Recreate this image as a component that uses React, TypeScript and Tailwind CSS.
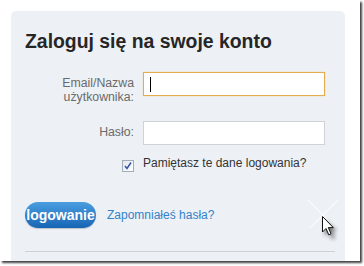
import React from "react";

const font = { fontFamily: '"Liberation Sans", Arial, sans-serif' };

function Cursor() {
  return (
    <svg
      className="absolute left-[306px] top-[198px]"
      width="40"
      height="44"
      viewBox="0 0 40 44"
    >
      <defs>
        <filter id="blur" x="-50%" y="-50%" width="200%" height="200%">
          <feGaussianBlur stdDeviation="2.2" />
        </filter>
      </defs>
      {/* faint sparkle */}
      <line x1="2" y1="2" x2="30" y2="30" stroke="#ffffff" strokeWidth="1.2" opacity="0.6" />
      <line x1="32" y1="2" x2="4" y2="30" stroke="#ffffff" strokeWidth="1.2" opacity="0.6" />
      {/* shadow */}
      <path
        d="M19 22 L19 38 L23 34 L26 41 L29 40 L26 33 L31 33 Z"
        fill="#000"
        opacity="0.55"
        filter="url(#blur)"
      />
      {/* arrow */}
      <path
        d="M16.5 18.5 L16.5 34 L20 30.5 L22.8 36.8 L25 35.8 L22.3 29.6 L27.3 29.6 Z"
        fill="#fff"
        stroke="#111"
        strokeWidth="1"
        strokeLinejoin="round"
      />
    </svg>
  );
}

export default function App() {
  return (
    <div className="w-[364px] h-[266px] bg-white relative overflow-hidden" style={font}>
      <div className="w-[360px] h-[261px] bg-white shadow-[2px_2px_2px_rgba(0,0,0,0.75)] overflow-hidden relative">
        <div className="ml-[11px] mt-[11px] w-[334px] h-[260px] bg-[#edf1f6] rounded-t-[5px] pt-[18px] pl-[14px]">
          <h2 className="h-[24px] leading-[24px] text-[19.4px] font-bold text-[#262626] whitespace-nowrap">
            Zaloguj się na swoje konto
          </h2>

          {/* email */}
          <div className="flex mt-[19px] gap-[9px]">
            <label className="w-[109px] pt-[4px] text-right text-[12.3px] leading-[14px] text-[#6a6a6a]">
              Email/Nazwa
              <br />
              użytkownika:
            </label>
            <div className="w-[182px] h-[24px] bg-white border border-[#e3ad4f] shadow-[0_0_1px_#f0c880] relative">
              <span className="absolute left-[6px] top-[4px] w-px h-[15px] bg-black" />
            </div>
          </div>

          {/* password */}
          <div className="flex mt-[17px] gap-[9px]">
            <label className="w-[109px] pt-[4px] text-right text-[12.3px] leading-[14px] text-[#6a6a6a]">
              Hasło:
            </label>
            <div className="w-[182px] h-[24px] bg-white border border-[#cfd3d8]" />
          </div>

          {/* remember */}
          <div className="flex mt-[11px] gap-[9px] h-[16px]">
            <div className="w-[109px] flex justify-end pt-[4px]">
              <div className="w-[12px] h-[12px] border border-[#a3adb9] bg-gradient-to-br from-[#e2e6ec] to-white flex items-center justify-center">
                <svg width="10" height="10" viewBox="0 0 10 10">
                  <path d="M2 5 L4 7.5 L8 1.5" fill="none" stroke="#3553a3" strokeWidth="1.5" />
                </svg>
              </div>
            </div>
            <span className="text-[12px] leading-[14px] text-[#333] whitespace-nowrap">
              Pamiętasz te dane logowania?
            </span>
          </div>

          {/* actions */}
          <div className="flex items-center mt-[30px]">
            <button className="w-[71px] h-[26px] rounded-full bg-gradient-to-b from-[#4a9ee0] to-[#1565b5] text-white text-[14px] font-bold flex items-center justify-center overflow-visible whitespace-nowrap shadow-[0_1px_1px_rgba(0,0,0,0.2)]">
              logowanie
            </button>
            <a className="ml-[11px] text-[12px] leading-[14px] text-[#3282c8] whitespace-nowrap">
              Zapomniałeś hasła?
            </a>
          </div>

          <div className="mt-[23px] w-[310px] border-t border-[#cdd1d6]" />
        </div>
        <Cursor />
      </div>
    </div>
  );
}
